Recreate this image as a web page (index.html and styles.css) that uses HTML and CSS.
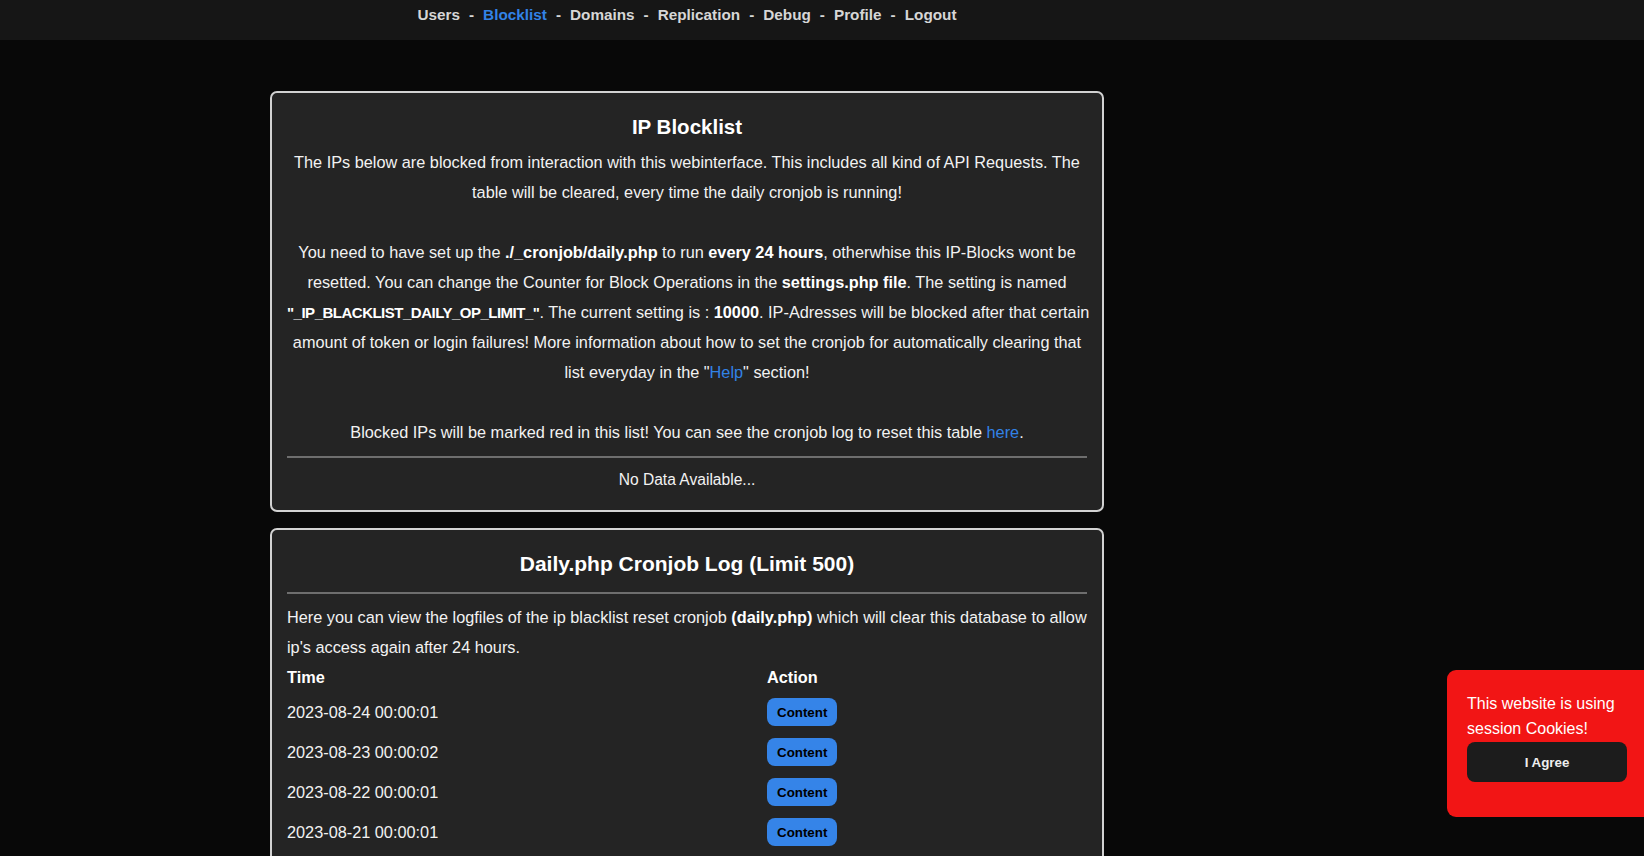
FILE: index.html
```html
<!DOCTYPE html>
<html lang="en">
<head>
<meta charset="utf-8">
<title>IP Blocklist</title>
<link rel="stylesheet" href="styles.css">
</head>
<body>
<header class="topbar">
  <nav class="nav">
    <a class="nav-link" href="#">Users</a><span class="sep">-</span><a class="nav-link active" href="#">Blocklist</a><span class="sep">-</span><a class="nav-link" href="#">Domains</a><span class="sep">-</span><a class="nav-link" href="#">Replication</a><span class="sep">-</span><a class="nav-link" href="#">Debug</a><span class="sep">-</span><a class="nav-link" href="#">Profile</a><span class="sep">-</span><a class="nav-link" href="#">Logout</a>
  </nav>
</header>

<main class="page">
  <section class="card">
    <h2 class="card-title">IP Blocklist</h2>
    <p class="card-text center">The IPs below are blocked from interaction with this webinterface. This includes all kind of API Requests. The<br>table will be cleared, every time the daily cronjob is running!<br><br>You need to have set up the <b>./_cronjob/daily.php</b> to run <b>every 24 hours</b>, otherwhise this IP-Blocks wont be<br>resetted. You can change the Counter for Block Operations in the <b>settings.php file</b>. The setting is named<br><b class="const">"_IP_BLACKLIST_DAILY_OP_LIMIT_"</b>. The current setting is : <b>10000</b>. IP-Adresses will be blocked after that certain<br>amount of token or login failures! More information about how to set the cronjob for automatically clearing that<br>list everyday in the "<a class="link" href="#">Help</a>" section!<br><br>Blocked IPs will be marked red in this list! You can see the cronjob log to reset this table <a class="link" href="#">here</a>.</p>
    <hr class="divider">
    <p class="empty">No Data Available...</p>
  </section>

  <section class="card">
    <h2 class="card-title large">Daily.php Cronjob Log (Limit 500)</h2>
    <hr class="divider divider-title">
    <p class="card-text">Here you can view the logfiles of the ip blacklist reset cronjob <b>(daily.php)</b> which will clear this database to allow<br>ip's access again after 24 hours.</p>
    <table class="log">
      <thead>
        <tr><th class="col-time">Time</th><th>Action</th></tr>
      </thead>
      <tbody id="log-rows"></tbody>
    </table>
  </section>
</main>

<div class="cookie">
  <p class="cookie-text">This website is using session Cookies!</p>
  <button class="cookie-btn" type="button">I Agree</button>
</div>

<script src="script.js"></script>
</body>
</html>
```

FILE: styles.css
```css
html::-webkit-scrollbar {
  width: 2px;
}
html::-webkit-scrollbar-track {
  background: #0a0a0a;
}
html::-webkit-scrollbar-thumb {
  background: #a3a3a3;
}

body {
  margin: 0;
  background: #080808;
  color: #f2f2f2;
  font-family: "Liberation Sans", Arial, sans-serif;
  font-size: 16.3px;
}

.topbar {
  height: 40px;
  background: #161616;
}

.nav {
  width: 834px;
  padding-left: 270px;
  text-align: center;
  line-height: 29px;
  font-weight: bold;
  font-size: 15.3px;
  color: #d6d6d6;
}

.nav-link {
  color: #d6d6d6;
  text-decoration: none;
}

.nav-link.active {
  color: #3282e6;
}

.sep {
  margin: 0 9px;
}

.page {
  width: 834px;
  padding: 51px 0 16px 270px;
  display: flex;
  flex-direction: column;
  gap: 16px;
}

.card {
  background: #242424;
  border: 2px solid #d2d2d2;
  border-radius: 7px;
  padding: 15px;
}

.card-title {
  margin: 4px 0 5px;
  text-align: center;
  font-size: 20.5px;
  line-height: 30px;
  font-weight: bold;
  color: #ffffff;
}

.card-title.large {
  font-size: 21px;
  margin: 4px 0 0;
}

.card-text {
  margin: 0;
  line-height: 30px;
  white-space: nowrap;
}

.card-text.center {
  text-align: center;
}

.card-text b {
  color: #ffffff;
}

.card-text .const {
  font-size: 15px;
  line-height: 1;
  letter-spacing: -0.5px;
}

.link {
  color: #3282e6;
  text-decoration: none;
}

.divider {
  border: 0;
  height: 2px;
  background: #6e6e6e;
  margin: 9px 0 7px;
}

.divider-title {
  margin: 13px 0 8px;
}

.empty {
  margin: 0;
  text-align: center;
  line-height: 30px;
  font-size: 15.6px;
}

.log {
  width: 100%;
  border-collapse: collapse;
}

.log th {
  text-align: left;
  font-weight: bold;
  height: 30px;
  padding: 0;
  color: #ffffff;
}

.log th.col-time {
  width: 60%;
}

.log td {
  height: 40px;
  padding: 0;
  vertical-align: middle;
}

.content-btn {
  font-family: "Liberation Sans", Arial, sans-serif;
  font-size: 13.33px;
  font-weight: bold;
  color: #000000;
  background: #3584e8;
  border: none;
  border-radius: 8px;
  height: 28px;
  padding: 0 10px;
  cursor: pointer;
}

.cookie {
  position: fixed;
  right: 0;
  bottom: 39px;
  width: 160px;
  padding: 21px 17px 35px 20px;
  background: #f21515;
  border-radius: 9px 0 0 9px;
  font-family: "Liberation Sans", Arial, sans-serif;
}

.cookie-text {
  margin: 0;
  font-size: 16px;
  line-height: 25px;
  color: #ffffff;
}

.cookie-btn {
  display: block;
  width: 160px;
  height: 40px;
  margin-top: 1px;
  border: none;
  border-radius: 8px;
  background: #1c1c1c;
  color: #eeeeee;
  font-family: "Liberation Sans", Arial, sans-serif;
  font-size: 13.33px;
  font-weight: bold;
}
```

FILE: script.js
```js
(function () {
  var tbody = document.getElementById('log-rows');
  var start = Date.UTC(2023, 7, 24);
  var html = '';
  for (var i = 0; i < 115; i++) {
    var d = new Date(start - i * 86400000).toISOString().slice(0, 10);
    var sec = (i % 6 === 1) ? '02' : '01';
    html += '<tr><td>' + d + ' 00:00:' + sec + '</td><td><button class="content-btn" type="button">Content</button></td></tr>';
  }
  tbody.innerHTML = html;
})();
```
